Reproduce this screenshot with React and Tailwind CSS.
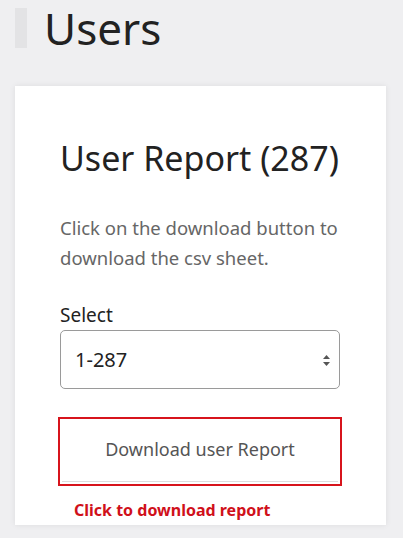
export default function App() {
  return (
    <div
      className="min-h-[538px] w-[403px] bg-[#efeff1] overflow-hidden"
      style={{ fontFamily: "'Noto Sans', 'Open Sans', sans-serif" }}
    >
      {/* page title */}
      <div className="flex items-start gap-[17px] pl-[15px] h-[86px]">
        <div className="mt-[8px] w-[12px] h-[40px] bg-[#e3e3e5]" />
        <h1 className="text-[44px] leading-[56px] font-normal text-[#222]">Users</h1>
      </div>

      {/* card */}
      <div className="ml-[15px] w-[371px] h-[439px] bg-white shadow-[0_0_6px_rgba(0,0,0,0.08)] px-[45px] pt-[48px]">
        <h2 className="text-[34px] leading-[48px] font-normal text-[#222]">User Report (287)</h2>

        <p className="mt-[31px] -mr-[10px] text-[18.5px] leading-[30px] text-[#666]">
          Click on the download button to
          <br />
          download the csv sheet.
        </p>

        <label className="block mt-[29px] text-[19px] leading-[26px] text-[#222]">Select</label>
        <div className="relative mt-[2px] w-[280px] h-[59px] border border-[#9a9a9a] rounded-[5px] flex items-center pl-[14px]">
          <span className="text-[20px] text-[#222]">1-287</span>
          <svg className="absolute right-[9px] top-[24px]" width="7" height="11" viewBox="0 0 7 11">
            <path d="M3.5 0 L7 4 L0 4 Z" fill="#555" />
            <path d="M0 7 L7 7 L3.5 11 Z" fill="#555" />
          </svg>
        </div>

        <div className="mt-[28px] -ml-[2px] w-[284px] h-[69px] border-2 border-[#d7141c] p-[2px]">
          <button className="w-full h-full border-b border-[#ddd] text-[18px] text-[#555] flex items-center justify-center pb-[4px]">
            Download user Report
          </button>
        </div>

        <div className="mt-[12px] ml-[14px] text-[16px] font-bold text-[#d0101a] leading-[24px]">
          Click to download report
        </div>
      </div>
    </div>
  );
}
